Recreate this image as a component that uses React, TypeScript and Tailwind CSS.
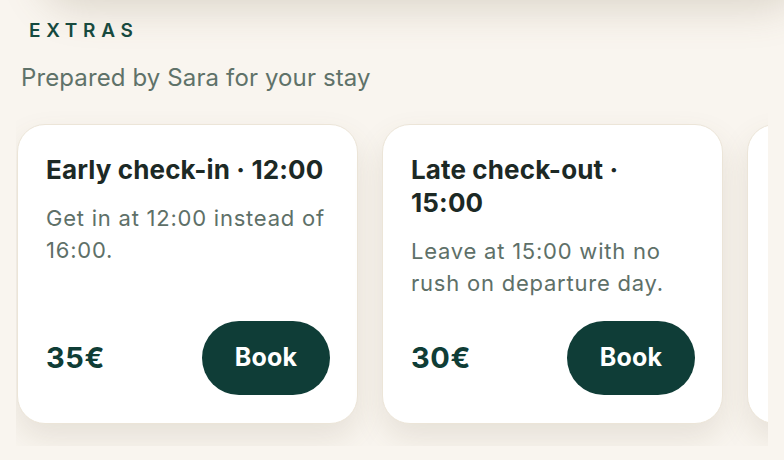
import React from 'react';

interface Extra {
  title: string;
  description: string;
  price: string;
}

const extras: Extra[] = [
  {
    title: 'Early check-in · 12:00',
    description: 'Get in at 12:00 instead of 16:00.',
    price: '35€',
  },
  {
    title: 'Late check-out · 15:00',
    description: 'Leave at 15:00 with no rush on departure day.',
    price: '30€',
  },
  {
    title: 'Airport transfer',
    description: 'A private car waiting for you at arrivals.',
    price: '45€',
  },
];

function ExtraCard({ extra }: { extra: Extra }) {
  return (
    <div className="flex flex-col w-[341px] h-[300px] shrink-0 pl-7 pr-[27px] py-7 bg-white border border-[#ece5d8] rounded-[28px] shadow-[0_14px_30px_rgba(110,90,60,0.13)]">
      <h3 className="text-[26px] leading-[33px] font-bold text-[#1c2925] tracking-[0.005em]">
        {extra.title}
      </h3>
      <p className="mt-[16px] text-[22px] leading-[32px] text-[#5e7068] tracking-[0.035em]">
        {extra.description}
      </p>
      <div className="mt-auto flex items-center justify-between">
        <span className="text-[29px] font-bold text-[#0f3d36] tracking-[0.02em]">
          {extra.price}
        </span>
        <button className="w-[128px] h-[74px] rounded-full bg-[#0f3d37] text-white text-[25px] font-bold tracking-[0.01em]">
          Book
        </button>
      </div>
    </div>
  );
}

export default function App() {
  return (
    <div
      className="relative w-[784px] h-[460px] overflow-hidden bg-[#f9f5ef]"
      style={{ fontFamily: 'Inter, "Noto Sans", sans-serif' }}
    >
      {/* header above, only its shadow peeks in */}
      <div className="absolute left-[40px] right-[-20px] top-[-70px] h-[70px] rounded-b-[40px] bg-[#f9f5ef] shadow-[0_8px_40px_rgba(120,100,70,0.22)]" />

      <div className="pt-[17px]">
        <p className="ml-[29px] text-[19px] leading-[28px] font-semibold tracking-[0.3em] text-[#154a3f]">
          EXTRAS
        </p>
        <p className="mt-[17px] ml-[21px] text-[24px] leading-[32px] text-[#5f7269] tracking-[0.005em]">
          Prepared by Sara for your stay
        </p>
      </div>

      <div className="ml-4 mt-[14px] w-[752px] overflow-hidden flex gap-6 pl-[1px] pt-4 pb-[22px]">
        {extras.map((extra) => (
          <ExtraCard key={extra.title} extra={extra} />
        ))}
      </div>
    </div>
  );
}
